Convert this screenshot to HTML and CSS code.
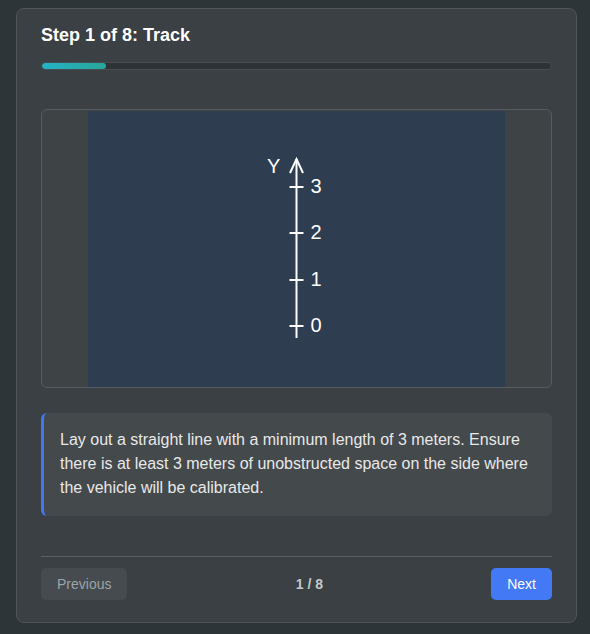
FILE: index.html
```html
<!DOCTYPE html>
<html>
<head>
<meta charset="utf-8">
<link rel="stylesheet" href="styles.css">
</head>
<body>
<div class="card">
  <h2 class="title">Step 1 of 8: Track</h2>
  <div class="progress"><div class="progress-fill" style="width:12.5%"></div></div>
  <div class="figure">
    <svg class="diagram" width="417" height="276" viewBox="0 0 417 276">
      <rect width="417" height="276" fill="#2e3d50"/>
      <g stroke="#ffffff" stroke-width="2" fill="none">
        <line x1="208.5" y1="48" x2="208.5" y2="227"/>
        <polyline points="202,62 208.5,48 215,62"/>
        <line x1="201.5" y1="76" x2="215.5" y2="76"/>
        <line x1="201.5" y1="122" x2="215.5" y2="122"/>
        <line x1="201.5" y1="169" x2="215.5" y2="169"/>
        <line x1="201.5" y1="215" x2="215.5" y2="215"/>
      </g>
      <g fill="#ffffff" font-family="Liberation Sans, Arial, sans-serif" font-size="20">
        <text x="179" y="62">Y</text>
        <text x="222.5" y="82">3</text>
        <text x="222.5" y="128">2</text>
        <text x="222.5" y="175">1</text>
        <text x="222.5" y="221">0</text>
      </g>
    </svg>
  </div>
  <div class="note">Lay out a straight line with a minimum length of 3 meters. Ensure there is at least 3 meters of unobstructed space on the side where the vehicle will be calibrated.</div>
  <div class="footer">
    <button class="btn btn-prev">Previous</button>
    <span class="counter">1 / 8</span>
    <button class="btn btn-next">Next</button>
  </div>
</div>
</body>
</html>
```
FILE: styles.css
```css
html, body {
  margin: 0;
  padding: 0;
  background: #2e3538;
}
body {
  padding: 8px 0 0 16px;
  font-family: "Liberation Sans", Arial, sans-serif;
}
.card {
  box-sizing: border-box;
  width: 561px;
  height: 615px;
  background: #3a4043;
  border: 1px solid #4f5558;
  border-radius: 8px;
  padding: 16px 24px 22px;
  display: flex;
  flex-direction: column;
}
.title {
  margin: 0;
  font-size: 18px;
  line-height: 20px;
  font-weight: bold;
  color: #ffffff;
}
.progress {
  margin-top: 17px;
  height: 8px;
  box-sizing: border-box;
  background: #2c3235;
  border: 1px solid #474d50;
  border-radius: 4px;
  overflow: hidden;
}
.progress-fill {
  height: 100%;
  background: linear-gradient(90deg, #23b3c7, #2aa69a);
  border-radius: 4px;
}
.figure {
  margin-top: 39px;
  height: 279px;
  box-sizing: border-box;
  border: 1px solid #565c5f;
  border-radius: 6px;
  background: #3e4446;
  display: flex;
  justify-content: center;
  align-items: center;
  overflow: hidden;
}
.diagram {
  display: block;
}
.note {
  margin-top: 25px;
  background: #44494c;
  border-left: 3px solid #3f78f2;
  border-radius: 6px;
  padding: 15px 16px 16px 16px;
  color: #e8e8e8;
  font-size: 16px;
  line-height: 24px;
}
.footer {
  margin-top: auto;
  border-top: 1px solid #5b6063;
  padding-top: 11px;
  display: flex;
  align-items: center;
  justify-content: space-between;
}
.btn {
  height: 32px;
  border: none;
  border-radius: 5px;
  font-family: "Liberation Sans", Arial, sans-serif;
  font-size: 14px;
  padding: 0 16px;
  cursor: pointer;
}
.btn-prev {
  background: #454b4f;
  color: #9ca3a8;
}
.btn-next {
  background: #4479f6;
  color: #ffffff;
}
.counter {
  font-size: 14px;
  font-weight: bold;
  color: #c4c8ca;
}
```
